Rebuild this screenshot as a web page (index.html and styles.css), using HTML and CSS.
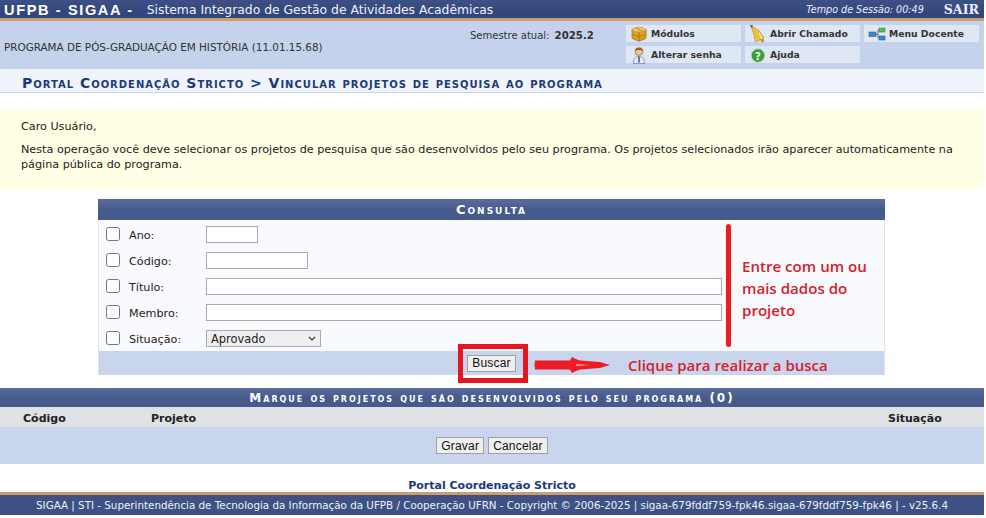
FILE: index.html
```html
<!DOCTYPE html>
<html lang="pt-BR">
<head>
<meta charset="utf-8">
<title>SIGAA</title>
<link rel="stylesheet" href="styles.css">
</head>
<body>
<div class="page">
  <header class="topbar">
    <div class="brand"><b class="brand-name">UFPB - SIGAA -</b><span class="brand-sub">Sistema Integrado de Gestão de Atividades Acadêmicas</span></div>
    <div class="session"><i>Tempo de Sessão: 00:49</i><b class="sair">SAIR</b></div>
  </header>
  <section class="infobar">
    <div class="program">PROGRAMA DE PÓS-GRADUAÇÃO EM HISTÓRIA (11.01.15.68)</div>
    <div class="semester">Semestre atual: <b>2025.2</b></div>
    <nav class="menu">
      <a class="menu-item"><svg class="ico" viewBox="0 0 18 18"><path d="M2 4.500Q9 0 16 4.500V13Q9 18.500 2 13z" fill="#dd9f22" stroke="#9c6c10" stroke-width=".7"/><path d="M2 4.500Q9 0 16 4.500 9 8.500 2 4.500z" fill="#f0cd6e"/><path d="M9 7v10M5.500 2.800l7 3.200M2.300 9.500Q9 13 15.700 9.500" stroke="#a87412" stroke-width=".8" fill="none"/></svg>Módulos</a>
      <a class="menu-item"><svg class="ico" viewBox="0 0 18 18"><path d="M1 0l3 .5-1 3.500z" fill="#6b4a14"/><path d="M3 2c3 .5 6 2 8.500 5.500l3.500 5.500-8.500 4-1.500-6.500C4.500 7.500 3 5 3 2z" fill="#eac045" stroke="#b48a1a" stroke-width=".6"/><path d="M10 8l3 6" stroke="#f7e6a0" stroke-width="1.200"/><circle cx="13.500" cy="15.500" r="1.700" fill="#c9961f"/></svg>Abrir Chamado</a>
      <a class="menu-item"><svg class="ico" viewBox="0 0 18 18"><rect x="1" y="7" width="7" height="4.500" fill="#3f86cf" stroke="#2b5c96" stroke-width=".6"/><rect x="11" y="3" width="6" height="4" fill="#5cb85c" stroke="#3c8a3c" stroke-width=".6"/><rect x="11" y="11" width="6" height="4" fill="#3f86cf" stroke="#2b5c96" stroke-width=".6"/><path d="M8 9.500h2V5h1M10 9.500V13h1" fill="none" stroke="#555" stroke-width=".8"/></svg>Menu Docente</a>
      <a class="menu-item"><svg class="ico" viewBox="0 0 18 18"><circle cx="9" cy="5.500" r="4" fill="#eec39a" stroke="#8a5a2c" stroke-width=".6"/><path d="M5 5c0-4 8-4 8 0-2-1.500-6-1.500-8 0z" fill="#8a5a2c"/><path d="M3.500 17.500c0-5 2-7 5.500-7s5.500 2 5.500 7z" fill="#e6ebf5" stroke="#5a6a9a" stroke-width=".6"/><path d="M9 10.500v6" stroke="#34497c" stroke-width="1.400"/></svg>Alterar senha</a>
      <a class="menu-item"><svg class="ico" viewBox="0 0 18 18"><circle cx="9" cy="9.500" r="6.800" fill="#3e9f3a" stroke="#bcd9b8" stroke-width="1"/><text x="9" y="13.500" class="ico-q">?</text></svg>Ajuda</a>
    </nav>
  </section>
  <h1 class="crumb">Portal Coordenação Stricto &gt; Vincular projetos de pesquisa ao programa</h1>
  <section class="notice">
    <p>Caro Usuário,</p>
    <p>Nesta operação você deve selecionar os projetos de pesquisa que são desenvolvidos pelo seu programa. Os projetos selecionados irão aparecer automaticamente na página pública do programa.</p>
  </section>
  <form class="search">
    <div class="caption">Consulta</div>
    <div class="search-body">
      <label class="row"><input class="check" type="checkbox"><span class="lbl">Ano:</span><input class="field w-ano" type="text"></label>
      <label class="row"><input class="check" type="checkbox"><span class="lbl">Código:</span><input class="field w-cod" type="text"></label>
      <label class="row"><input class="check" type="checkbox"><span class="lbl">Título:</span><input class="field w-full" type="text"></label>
      <label class="row"><input class="check" type="checkbox"><span class="lbl">Membro:</span><input class="field w-full" type="text"></label>
      <label class="row"><input class="check" type="checkbox"><span class="lbl">Situação:</span><span class="select-wrap"><select class="field w-sel"><option>Aprovado</option></select><svg class="chev" viewBox="0 0 8 5"><path d="M1 1l3 3 3-3" fill="none" stroke="#333" stroke-width="1.200"/></svg></span></label>
    </div>
    <div class="search-foot"><button class="btn" type="button">Buscar</button></div>
    <div class="note-line"></div>
    <div class="note-text">Entre com um ou<br>mais dados do<br>projeto</div>
    <div class="note-box"></div>
    <svg class="note-arrow" viewBox="0 0 78 16"><path d="M1 3.500H36L38 0Q42 2.500 46 3.500L66 5 76 8 66 11 46 12.500Q42 13.500 38 16L36 12.500H1Q0 8 1 3.500z" fill="#ed1c24"/><path d="M42 7.200L56 8 42 8.800z" fill="#f7c8c8"/></svg>
    <div class="note-click">Clique para realizar a busca</div>
  </form>
  <section class="results">
    <div class="caption caption-wide">Marque os projetos que são desenvolvidos pelo seu programa (0)</div>
    <div class="results-head"><span>Código</span><span>Projeto</span><span>Situação</span></div>
    <div class="results-foot"><button class="btn" type="button">Gravar</button><button class="btn" type="button">Cancelar</button></div>
  </section>
  <div class="portal-link">Portal Coordenação Stricto</div>
  <footer class="footer">SIGAA | STI - Superintendência de Tecnologia da Informação da UFPB / Cooperação UFRN - Copyright © 2006-2025 | sigaa-679fddf759-fpk46.sigaa-679fddf759-fpk46 | - v25.6.4</footer>
</div>
</body>
</html>
```

FILE: styles.css
```css
html, body { margin: 0; padding: 0; background: #fff; overflow: hidden; }
body { font: 11px "DejaVu Sans", Verdana, sans-serif; color: #222; }
.page { width: 984px; height: 518px; display: flex; flex-direction: column; }

.topbar { height: 18px; border-bottom: 3px solid #c99f6f; background: linear-gradient(#3c5085, #2f4378); color: #fff; display: flex; justify-content: space-between; align-items: center; }
.brand { display: flex; align-items: center; padding: 1px 0 0 4px; white-space: nowrap; }
.brand-name { font: bold 14.6px "Liberation Sans", Arial, sans-serif; letter-spacing: 1.6px; }
.brand-sub { font-size: 12.37px; margin-left: 13px; color: #f0f2f8; }
.session { display: flex; align-items: center; font-size: 9.6px; white-space: nowrap; color: #eef; }
.sair { font: bold 12.6px "DejaVu Serif", Georgia, serif; margin-left: 20px; margin-right: 5px; color: #eef; }

.infobar { height: 48px; background: #c4d2eb; display: flex; align-items: flex-start; }
.program { font-size: 10.4px; margin-top: 20px; margin-left: 4px; width: 466px; color: #333; white-space: nowrap; }
.semester { font-size: 10px; margin-top: 9px; width: 156px; color: #333; white-space: nowrap; }
.semester b { font-size: 10.2px; margin-left: 2px; }
.menu { display: grid; grid-template-columns: 115px 115px 115px; column-gap: 4px; row-gap: 4px; margin-top: 4px; }
.menu-item { height: 17px; background: #dfe6f4; color: #333; font-size: 9.25px; font-weight: bold; display: flex; align-items: center; white-space: nowrap; }
.ico { width: 18px; height: 18px; margin: 0 3px 0 4px; flex: none; }
.ico-q { font: bold 10px "DejaVu Sans", sans-serif; fill: #fff; text-anchor: middle; }

.crumb { margin: 0; height: 23px; background: #eff3fa; border-bottom: 1px solid #c8d2e0; padding-left: 22px; font: bold 14px/28px "DejaVu Sans", Verdana, sans-serif; font-variant: small-caps; color: #1b3a7a; letter-spacing: .98px; white-space: nowrap; overflow: hidden; }

.notice { margin-top: 16px; height: 80px; box-sizing: border-box; padding: 10px 20px 0 21px; background: #ffffe5; font-size: 11.2px; line-height: 15px; color: #222; }
.notice p { margin: 0 0 8px; }

.search { position: relative; width: 787px; margin: 10px 0 0 98px; }
.caption { height: 21px; background: linear-gradient(#5a6e9d, #465a8c 50%); color: #fff; font: bold 13px/22px "DejaVu Sans", Verdana, sans-serif; font-variant: small-caps; letter-spacing: 2px; text-align: center; white-space: nowrap; }
.search-body { height: 130px; padding-top: 1px; background: #f9fafd; border-right: 1px solid #dfe4ec; border-left: 1px solid #dfe4ec; }
.row { height: 26px; display: flex; align-items: center; }
.check { width: 14px; height: 14px; margin: 0 0 0 7px; flex: none; accent-color: #666; }
.lbl { width: 77px; margin-left: 9px; padding-top: 2px; font-size: 11.2px; color: #222; }
.field { box-sizing: border-box; height: 17px; border: 1px solid #aaa; background: #fff; padding: 0 4px; margin: 0; font: 11.4px "DejaVu Sans", Verdana, sans-serif; color: #222; }
.w-ano { width: 52px; }
.w-cod { width: 102px; }
.w-full { width: 516px; }
.select-wrap { position: relative; display: flex; }
.w-sel { width: 115px; background: #efefef; color: #222; appearance: none; padding-top: 1px; }
.chev { position: absolute; right: 5px; top: 6px; width: 8px; height: 5px; }
.search-foot { height: 24px; background: #c8d5ec; border-right: 1px solid #dfe4ec; border-left: 1px solid #dfe4ec; display: flex; justify-content: center; align-items: center; }
.btn { height: 17px; padding: 0 4px; margin: 0; border: 1px solid #a0a0a0; background: #efefef; color: #111; font: 12px "Liberation Sans", Arial, sans-serif; letter-spacing: .2px; box-sizing: border-box; }

.note-line { position: absolute; left: 628px; top: 25px; width: 5px; height: 123px; border-radius: 3px; background: #ed1c24; }
.note-text { position: absolute; left: 644px; top: 56px; font: 600 15.1px/22px "Open Sans", sans-serif; color: #d8202c; white-space: nowrap; }
.note-box { position: absolute; left: 360px; top: 145px; width: 60px; height: 29px; border: 5px solid #e4161e; }
.note-arrow { position: absolute; left: 436px; top: 158px; width: 78px; height: 16px; }
.note-click { position: absolute; left: 530px; top: 156px; font: 600 15px/20px "Open Sans", sans-serif; color: #d8202c; white-space: nowrap; }

.results { margin-top: 13px; }
.caption-wide { height: 19px; line-height: 20px; font-size: 12px; letter-spacing: 1.97px; }
.results-head { height: 20px; background: #dfe1e6; display: grid; grid-template-columns: 128px 737px 1fr; padding: 2px 0 0 23px; box-sizing: border-box; align-items: center; font-weight: bold; font-size: 11px; color: #222; }
.results-foot { height: 37px; background: #c8d5ec; display: flex; justify-content: center; align-items: center; gap: 4px; }

.portal-link { margin-top: 15px; height: 13px; line-height: 14px; text-align: center; font-weight: bold; font-size: 11px; color: #1b3a7a; }
.footer { height: 20px; border-top: 3px solid #c99f6f; background: #3d5185; color: #eef1f7; font-size: 10.33px; line-height: 21px; text-align: center; white-space: nowrap; }
```
